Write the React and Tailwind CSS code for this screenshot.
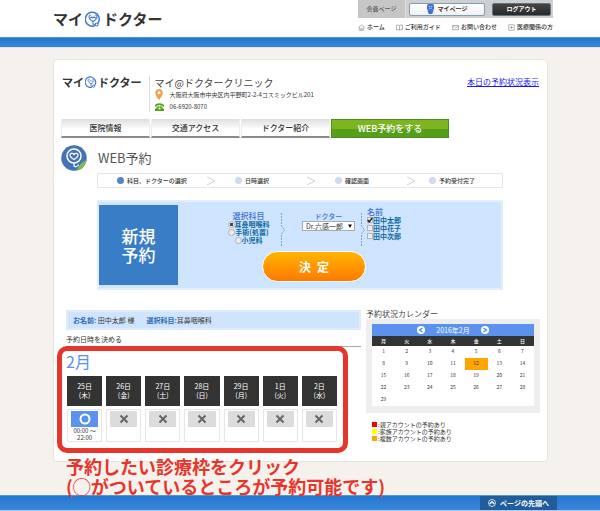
const LogoMark = ({ className }) => (
  <svg viewBox="0 0 32 32" className={className} fill="none" stroke="#4479c9" aria-hidden="true">
    <path d="M26 24.5A14 14 0 1 0 18 30" strokeWidth="3" strokeLinecap="round" />
    <path
      d="M16 21c-5-3-8-5.500-8-9 0-2.500 1.500-4 3.500-4M16 21c5-3 8-5.500 8-9 0-2.500-1.500-4-3.500-4M11 14c1.500-2.500 3.500-2 5 0 1.500-2 3.500-2.500 5 0"
      strokeWidth="2.2"
      strokeLinecap="round"
    />
    <path d="M16 21v5c0 3 4 3 5 1" strokeWidth="2.2" strokeLinecap="round" />
    <circle cx="23" cy="27" r="3" strokeWidth="2.2" />
  </svg>
);

const Logo = ({ large }) => (
  <a
    href="#top"
    className={
      large
        ? "flex items-center gap-[2px] text-[15px] leading-[16px] font-bold"
        : "flex items-center gap-px text-[11px] leading-[12px] font-bold"
    }
  >
    <span>マイ</span>
    <LogoMark className={large ? "size-[16px]" : "size-[12px]"} />
    <span>ドクター</span>
  </a>
);

const icons = {
  home: <path d="M1.500 6.500 7 2l5.500 4.500M2.500 6v6.500h9V6M5.500 12.500V9h3v3.500" />,
  book: <path d="M7 3C5.500 1.800 3 1.800 1 2.300v9.200c2-.5 4.500-.5 6 .7 1.500-1.200 4-1.200 6-.7V2.300C11 1.800 8.500 1.800 7 3zM7 3v9" />,
  mail: <path d="M1 3h12v8.500H1zM1 3.500l6 4.500 6-4.500" />,
  medical: <path d="M1.500 1.500h11v11h-11zM7 4v6M4 7h6" />,
};

const topLinks = [
  ["home", "ホーム"],
  ["book", "ご利用ガイド"],
  ["mail", "お問い合わせ"],
  ["medical", "医療関係の方"],
];

const steps = ["科目、ドクターの選択", "日時選択", "確認画面", "予約受付完了"];
const subjects = ["耳鼻咽喉科", "手術(処置)", "小児科"];
const patients = ["田中太郎", "田中花子", "田中次郎"];
const days = [
  ["25日", "(木)"],
  ["26日", "(金)"],
  ["27日", "(土)"],
  ["28日", "(日)"],
  ["29日", "(月)"],
  ["1日", "(火)"],
  ["2日", "(水)"],
];
const weekdays = ["月", "火", "水", "木", "金", "土", "日"];
const weeks = [0, 1, 2, 3, 4].map((w) =>
  weekdays.map((_, d) => (w * 7 + d + 1 <= 29 ? w * 7 + d + 1 : "")),
);
const legend = [
  ["bg-[#ff0000]", "親アカウントの予約あり"],
  ["bg-[#ffff00]", "家族アカウントの予約あり"],
  ["bg-[#ffa500]", "複数アカウントの予約あり"],
];

function Header() {
  return (
    <header className="bg-linear-to-b from-white from-60% to-[#edf4f7]">
      <div className="flex h-[37px] items-start justify-between pr-[47px] pl-[53px]">
        <div className="pt-[11px]">
          <Logo large />
        </div>
        <div className="w-[195px] text-[6px] leading-[8px]">
          <div className="flex h-[18px] bg-[#cfcfcf]">
            <div className="flex w-[48px] items-center justify-center border-r border-[#e2e2e2] bg-[#c6c6c6] pb-px font-medium text-[#5a5a5a]">
              会員ページ
            </div>
            <div className="flex flex-1 items-center justify-between pr-[2px] pl-[3px]">
              <button className="flex h-[13px] w-[76px] items-center justify-center gap-[4px] rounded-[2px] border border-[#7c9fb5] bg-linear-to-b from-white to-[#f1f1f1] font-bold">
                <svg viewBox="0 0 14 20" className="h-[10px] w-[7px]" fill="#3f74cf" aria-hidden="true">
                  <rect x="0" y="0" width="14" height="12" rx="3" />
                  <path d="M2 12h10l1 4-2 1v3H3v-3l-2-1z" />
                  <circle cx="4.500" cy="5" r="1.200" fill="#fff" />
                  <circle cx="9.500" cy="5" r="1.200" fill="#fff" />
                  <path d="M4 8.500h6" stroke="#fff" />
                </svg>
                マイページ
              </button>
              <button className="h-[13px] w-[59px] rounded-[2px] border border-[#5d7482] bg-linear-to-b from-[#454545] to-[#2a2a2a] font-bold text-white">
                ログアウト
              </button>
            </div>
          </div>
          <nav className="mt-[5px] flex justify-between font-medium">
            {topLinks.map(([icon, label]) => (
              <a key={label} href="#top" className="flex items-center gap-[2px]">
                <svg viewBox="0 0 14 14" className="size-[7px]" fill="none" stroke="#999" strokeWidth="1.500" aria-hidden="true">
                  {icons[icon]}
                </svg>
                {label}
              </a>
            ))}
          </nav>
        </div>
      </div>
      <div className="h-[11px] border-t border-b border-t-[#5b94c6] border-b-[#dbe7f0] bg-linear-to-b from-[#1f78d2] to-[#3a86d8]" />
    </header>
  );
}

function Clinic() {
  return (
    <div className="flex h-[37px] items-start pr-[8px] pl-[8px]">
      <Logo />
      <div className="ml-[7px] h-[36px] border-l border-[#ddd] pl-[5px]">
        <h1 className="text-[10px] leading-[13px] text-[#444]">マイ@ドクタークリニック</h1>
        <p className="flex items-center gap-[7px] text-[6px] leading-[11px]">
          <svg viewBox="0 0 16 22" className="h-[11px] w-[8px]" aria-hidden="true">
            <path d="M8 0C3 0 .5 3.500.5 7.500.5 13 8 22 8 22s7.500-9 7.500-14.500C15.500 3.500 13 0 8 0z" fill="#f2a04e" />
            <circle cx="8" cy="7.500" r="3" fill="#fff" />
          </svg>
          大阪府大阪市中央区内平野町2-2-4コスミックビル201
        </p>
        <p className="mt-px flex items-center gap-[6px] text-[6px] leading-[11px]">
          <svg viewBox="0 0 18 16" className="h-[8px] w-[9px]" fill="#55a51c" aria-hidden="true">
            <path d="M0 5C1-1 17-1 18 5v2h-5V4H5v3H0zM6 5h1.500v2h3V5H12v2l6 5v4H0v-4l6-5z" />
            <circle cx="9" cy="11" r="2.200" fill="#fff" />
          </svg>
          06-6920-8070
        </p>
      </div>
      <a href="#status" className="ml-auto text-[8px] leading-[11px] text-[#1a1aee] underline">
        本日の予約状況表示
      </a>
    </div>
  );
}

function Tabs() {
  return (
    <nav className="mt-[6px] flex h-[19px] gap-px px-[7px] text-center text-[8px] leading-[18px] font-medium">
      {["医院情報", "交通アクセス", "ドクター紹介"].map((t) => (
        <a
          key={t}
          href="#top"
          className="w-[89px] border-x border-b-2 border-x-[#ececec] border-b-[#8a8a8a] bg-linear-to-b from-[#dedede] to-white to-60%"
        >
          {t}
        </a>
      ))}
      <a
        href="#reserve"
        className="w-[118px] border border-[#4c8d1d] bg-linear-to-b from-[#7cb422] from-50% to-[#579f1b] to-50% text-[9px] leading-[17px] text-white"
      >
        WEB予約をする
      </a>
    </nav>
  );
}

const Divider = () => (
  <svg viewBox="0 0 6 34" className="h-[34px] w-[6px]" fill="none" stroke="#7ea3dc" strokeDasharray="2 1" aria-hidden="true">
    <path d="M1.500 0v13l3 4-3 4v13" />
  </svg>
);

function ReservationForm() {
  return (
    <form
      className="mt-[12px] mr-[44px] ml-[43px] flex h-[90px] border-2 border-[#e3eefc] bg-[#cee4ff] py-[3px] text-[#0d67a0]"
      onSubmit={(e) => e.preventDefault()}
    >
      <h3 className="flex w-[79px] items-center justify-center bg-[#3078c2] bg-[radial-gradient(#2669b2_40%,#387dc6_50%)] bg-size-[2px_2px] text-center text-[17px] leading-[19px] font-medium text-white">
        新規
        <br />
        予約
      </h3>
      <div className="flex-1">
        <div className="flex h-[46px] pl-[49px] text-[7px] leading-[8px] font-bold">
          <fieldset className="mt-[6px] w-[43px]">
            <legend className="mx-auto text-[8px] leading-[9px] font-medium text-[#3f72d0]">選択科目</legend>
            {subjects.map((s, i) => (
              <label key={s} className="flex items-center justify-center">
                <input
                  type="radio"
                  name="subject"
                  defaultChecked={i === 0}
                  className="size-[7px] appearance-none rounded-full border border-[#b0b0b0] bg-[#eee] checked:bg-[radial-gradient(#444_45%,#eee_55%)]"
                />
                {s}
              </label>
            ))}
          </fieldset>
          <div className="ml-[10px] pt-[8px]">
            <Divider />
          </div>
          <div className="mt-[7px] ml-[16px] w-[53px] text-center">
            <label htmlFor="doctor" className="block text-[7px] leading-[9px] font-medium text-[#3f72d0]">
              ドクター
            </label>
            <div className="relative">
              <select
                id="doctor"
                className="block h-[10px] w-full appearance-none border border-[#a9a9a9] bg-white pl-[3px] text-[7px] leading-[8px] font-normal text-[#333]"
              >
                <option>Dr.六感一郎</option>
              </select>
              <svg viewBox="0 0 8 8" className="pointer-events-none absolute top-[3px] right-[3px] size-[4px]" aria-hidden="true">
                <path d="M0 1h8L4 8z" fill="#111" />
              </svg>
            </div>
          </div>
          <div className="ml-[5px] pt-[8px]">
            <Divider />
          </div>
          <fieldset className="mt-[2px] ml-px">
            <legend className="text-[8px] leading-[9px] font-medium text-[#3f72d0]">名前</legend>
            {patients.map((p, i) => (
              <label key={p} className="relative flex items-center">
                <input
                  type="checkbox"
                  defaultChecked={i === 0}
                  className="peer size-[6px] appearance-none border border-[#b5b5b5] bg-[#eee]"
                />
                <svg
                  viewBox="0 0 8 8"
                  className="absolute top-[1px] left-0 hidden size-[6px] peer-checked:block"
                  fill="none"
                  stroke="#222"
                  strokeWidth="2"
                  aria-hidden="true"
                >
                  <path d="M1 4l2 2.500L7 1" />
                </svg>
                {p}
              </label>
            ))}
          </fieldset>
        </div>
        <button className="ml-[84px] block h-[31px] w-[104px] rounded-full border border-white bg-linear-to-b from-[#ffb500] to-[#ff7800] text-[12px] leading-[28px] font-bold text-white">
          決&ensp;定
        </button>
      </div>
    </form>
  );
}

function Schedule() {
  return (
    <section className="relative min-w-0 flex-1">
      <p className="flex h-[20px] items-center border-2 border-[#e0ebfa] bg-[#cee4ff] pl-[5px] text-[7px] leading-[10px] whitespace-pre">
        <b className="text-[#2c69b3]">お名前:</b> 田中太郎 様<b className="ml-[12px] text-[#2c69b3]">選択科目:</b>耳鼻咽喉科
      </p>
      <h3 className="mt-[4px] h-[13px] border-b border-[#aaa] text-[7px] leading-[10px]">予約日時を決める</h3>
      <h4 className="mt-[5px] text-[16px] leading-[18px] text-[#5a90ea]">2月</h4>
      <table className="mt-[3px] -mb-[3px] -ml-[3px] w-[calc(100%-17px)] table-fixed border-separate border-spacing-x-[4px] border-spacing-y-[3px] text-center">
        <thead>
          <tr>
            {days.map(([d, w]) => (
              <th key={d} className="h-[30px] bg-[#333] p-0 text-[7px] leading-[9px] font-normal text-white">
                {d}
                <br />
                {w}
              </th>
            ))}
          </tr>
        </thead>
        <tbody>
          <tr>
            {days.map(([d], i) => (
              <td key={d} className="h-[33px] border border-[#e6e6e6] p-0 px-[3px] pt-px align-top text-[6px] leading-[7px]">
                <button
                  disabled={i > 0}
                  aria-label={i ? "予約不可" : "予約可能"}
                  className="flex h-[16px] w-full items-center justify-center bg-[#5b92ee] disabled:bg-[#dcdcdc]"
                >
                  <svg viewBox="0 0 12 12" className="size-[12px]" fill="none" strokeWidth="2" aria-hidden="true">
                    {i ? (
                      <path d="M2.500 2.500l7 7M9.500 2.500l-7 7" stroke="#6b6561" />
                    ) : (
                      <circle cx="6" cy="6" r="4.500" stroke="#fff" />
                    )}
                  </svg>
                </button>
                {i === 0 && (
                  <>
                    00:00 ～<br />
                    22:00
                  </>
                )}
              </td>
            ))}
          </tr>
        </tbody>
      </table>
      <div className="pointer-events-none absolute top-[36px] right-[13px] -bottom-[11px] -left-[9px] rounded-[10px] border-5 border-[#e8352b]" />
      <p className="absolute top-[146px] left-0 text-[18px] leading-[20px] font-bold whitespace-nowrap text-[#e8352b]">
        予約したい診療枠をクリック
        <br />
        (◯がついているところが予約可能です)
      </p>
    </section>
  );
}

const MonthButton = ({ label, path }) => (
  <button aria-label={label} className="size-[8px] rounded-full bg-white">
    <svg viewBox="0 0 8 8" className="size-[8px]" fill="none" stroke="#4a80dd" strokeWidth="1.200" aria-hidden="true">
      <path d={path} />
    </svg>
  </button>
);

function Calendar() {
  return (
    <aside className="-mt-px w-[174px]">
      <h3 className="text-[8px] leading-[10px] text-[#444]">予約状況カレンダー</h3>
      <div className="bg-[#eee] px-[6px] pt-[5px] pb-[7px]">
        <div className="flex h-[12px] items-center justify-center gap-[11px] bg-[#5b92ee] text-[7px] leading-[10px] text-white">
          <MonthButton label="前の月" path="M5.500 2L2.500 4l3 2" />
          2016年2月
          <MonthButton label="次の月" path="M2.500 2l3 2-3 2" />
        </div>
        <table className="w-full table-fixed border-collapse bg-white text-center text-[5px] leading-[6px]">
          <thead>
            <tr className="bg-[#333] text-white">
              {weekdays.map((d) => (
                <th key={d} className="h-[10px] p-0 pb-px font-medium">
                  {d}
                </th>
              ))}
            </tr>
          </thead>
          <tbody>
            {weeks.map((week, w) => (
              <tr key={w}>
                {week.map((n, i) => (
                  <td key={i} className={n === 12 ? "h-[12px] bg-[#ffa500] p-0 pb-[2px]" : "h-[12px] p-0 pb-[2px]"}>
                    {n}
                  </td>
                ))}
              </tr>
            ))}
          </tbody>
        </table>
      </div>
      <ul className="mt-[8px] pl-[6px] text-[6px] leading-[7px]">
        {legend.map(([color, text]) => (
          <li key={text} className="flex items-center gap-px">
            <span className={`size-[5px] ${color}`} />:{text}
          </li>
        ))}
      </ul>
    </aside>
  );
}

export default function App() {
  return (
    <div
      id="top"
      lang="ja"
      className="min-h-screen bg-[#f5f1ed] font-['Noto_Sans_CJK_JP',sans-serif] text-[#333]"
    >
      <Header />
      <main className="mt-[11px] mr-[52px] mb-[33px] ml-[53px] rounded-[4px] border border-[#e8e6da] bg-white pt-[16px] pb-[19px]">
        <Clinic />
        <Tabs />
        <h2 className="mt-[7px] flex h-[26px] items-center gap-[11px] pl-[7px] text-[13px] leading-[16px] text-[#555]">
          <svg viewBox="0 0 52 52" className="size-[26px]" fill="none" aria-hidden="true">
            <circle cx="26" cy="26" r="25.500" fill="#4474b8" />
            <path d="M51 30C43 33 35 40 32 51c10-1 17-9 19-21z" fill="#7dba50" />
            <circle cx="26" cy="22" r="14" stroke="#fff" strokeWidth="3" />
            <path d="M26 29c-5-3-8-6-8-9s5-5 8-1c3-4 8-2 8 1s-3 6-8 9zM26 36v5c0 4 8 3 9-2" stroke="#fff" strokeWidth="2.500" />
          </svg>
          WEB予約
        </h2>
        <ol className="mt-[2px] mr-[44px] ml-[43px] flex h-[15px] items-center rounded-[2px] border border-[#e6e6e6] pl-[18px] text-[6px] leading-[8px] font-medium">
          {steps.map((s, i) => {
            const last = i === steps.length - 1;
            return (
              <li key={s} className={last ? "flex w-[86px] pr-[14px]" : "flex flex-1 items-center"}>
                <span
                  className={
                    last
                      ? "flex flex-1 items-center justify-center gap-[3px]"
                      : "flex flex-1 items-center justify-center gap-[3px] pr-[18px] whitespace-nowrap"
                  }
                >
                  <span className={i ? "size-[7px] rounded-full bg-[#d0daf0]" : "size-[7px] rounded-full bg-[#5584cc]"} />
                  {s}
                </span>
                {!last && (
                  <svg viewBox="0 0 10 10" className="size-[10px]" fill="none" stroke="#d0d0d0" aria-hidden="true">
                    <path d="M1 1l8 4-8 4" />
                  </svg>
                )}
              </li>
            );
          })}
        </ol>
        <ReservationForm />
        <div className="mt-[20px] flex gap-[5px] pr-[7px] pl-[12px]">
          <Schedule />
          <Calendar />
        </div>
      </main>
      <footer className="flex h-[16px] justify-end border-t border-b border-t-[#5b94c6] border-b-[#a9c9e8] bg-linear-to-b from-[#1f78d2] to-[#3a86d8] pr-[43px]">
        <a
          href="#top"
          className="flex w-[77px] items-center justify-center gap-[4px] bg-[#205d9b] text-[7px] leading-[10px] font-bold text-white"
        >
          <svg viewBox="0 0 16 16" className="size-[8px]" fill="none" stroke="#fff" aria-hidden="true">
            <circle cx="8" cy="8" r="7" strokeWidth="1.500" />
            <path d="M3.500 10L8 5.500l4.500 4.500" strokeWidth="2.500" />
          </svg>
          ページの先頭へ
        </a>
      </footer>
    </div>
  );
}
